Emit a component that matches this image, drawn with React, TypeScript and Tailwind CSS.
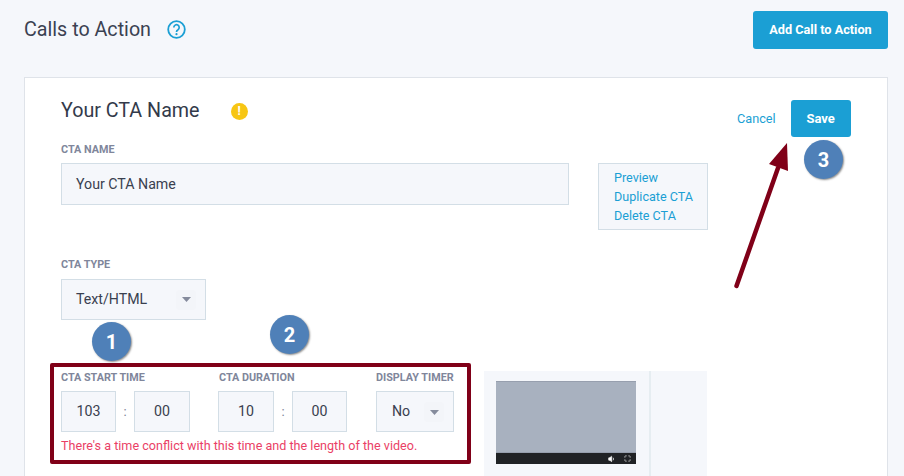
import { Volume1, Maximize } from "lucide-react";

const roboto = "font-['Roboto',sans-serif]";

function Label({ text, className = "" }: { text: string; className?: string }) {
  return <div className={"text-[10.8px] leading-[14px] font-bold text-[#80869b] " + className}>{text}</div>;
}

function Caret() {
  return (
    <span className="flex h-[20px] w-[20px] items-center justify-center rounded-sm bg-[#f3f5f9]">
      <svg width="9" height="5" viewBox="0 0 9 5">
        <path d="M0 0h9L4.5 5z" fill="#858b9c" />
      </svg>
    </span>
  );
}

function TimeBox({ value, width }: { value: string; width: string }) {
  return (
    <div className={"flex h-[41px] items-center justify-center border border-[#d3dee6] bg-[#f5f7fb] pt-px text-[14.2px] text-[#39404f] " + width}>
      {value}
    </div>
  );
}

function Badge({ n, className }: { n: number; className: string }) {
  return (
    <div
      className={
        "absolute flex h-[39px] w-[39px] items-center justify-center rounded-full bg-[#4f80b8] text-[20px] font-bold text-white shadow-[1px_1px_2px_rgba(0,0,0,0.45)] " +
        className
      }
    >
      {n}
    </div>
  );
}

export default function App() {
  return (
    <div className={"relative h-[476px] w-[904px] overflow-hidden bg-[#f5f7fb] " + roboto}>
      <div className="flex h-[77px] items-start justify-between pl-6 pr-4 pt-[11px]">
        <div className="flex h-[37px] items-center">
          <span className="text-[19.7px] text-[#3b4252]">Calls to Action</span>
          <svg className="ml-[16px]" width="19" height="19" viewBox="0 0 19 19" fill="none">
            <circle cx="9.5" cy="9.5" r="8.3" stroke="#1b9fd4" strokeWidth="1.8" />
            <path d="M6.8 7.4a2.7 2.7 0 1 1 4.2 2.3c-1 .6-1.5 1.1-1.5 2.2" stroke="#1b9fd4" strokeWidth="1.7" />
            <circle cx="9.5" cy="14.2" r="1.1" fill="#1b9fd4" />
          </svg>
        </div>
        <button className="h-[38px] w-[135px] rounded-[3px] bg-[#1b9fd4] text-[12.7px] font-bold text-white">
          Add Call to Action
        </button>
      </div>

      <div className="ml-6 mr-4 flex h-[420px] border border-[#dfe3e9] bg-white pl-[36px] pt-[22px]">
        <div className="w-[647px]">
          <div className="flex h-[22px] items-center">
            <span className="text-[19.7px] text-[#333a4a]">Your CTA Name</span>
            <span className="ml-[31px] flex h-[17px] w-[17px] items-center justify-center rounded-full bg-[#f7c614] text-[12px] font-bold text-white">
              !
            </span>
          </div>

          <Label text="CTA NAME" className="mt-[21px]" />
          <div className="mt-[6px] flex items-start">
            <div className="flex h-[42px] w-[508px] items-center border border-[#d3dee6] bg-[#f5f7fb] pl-[14px] pt-px text-[14.2px] text-[#39404f]">
              Your CTA Name
            </div>
            <div className="ml-[29px] flex h-[67px] w-[110px] flex-col justify-center border border-[#d3dee6] bg-[#f5f7fb] pl-[15px] text-[12.6px] leading-[19px] text-[#1b9fd4]">
              <span>Preview</span>
              <span>Duplicate CTA</span>
              <span>Delete CTA</span>
            </div>
          </div>

          <Label text="CTA TYPE" className="mt-[28px]" />
          <div className="mt-[7px] flex h-[41px] w-[145px] items-center justify-between border border-[#d3dee6] bg-[#f5f7fb] pl-[14px] pr-[9px] text-[14.2px] text-[#39404f]">
            Text/HTML
            <Caret />
          </div>

          <div className="ml-[-11px] mt-[43px] flex items-start">
            <div className="h-[101px] w-[421px] rounded-[2px] border-4 border-[#800018] pl-[7px] pt-[4px]">
              <div className="flex">
                <Label text="CTA START TIME" className="w-[158px]" />
                <Label text="CTA DURATION" className="w-[157px]" />
                <Label text="DISPLAY TIMER" />
              </div>
              <div className="mt-[6px] flex items-center">
                <TimeBox value="103" width="w-[55px]" />
                <span className="w-[18px] text-center text-[13px] text-[#7b8194]">:</span>
                <TimeBox value="00" width="w-[56px]" />
                <div className="w-[28px]" />
                <TimeBox value="10" width="w-[56px]" />
                <span className="w-[18px] text-center text-[13px] text-[#7b8194]">:</span>
                <TimeBox value="00" width="w-[55px]" />
                <div className="w-[29px]" />
                <div className="flex h-[41px] w-[78px] items-center justify-between border border-[#d3dee6] bg-[#f5f7fb] pl-[15px] pr-[9px] pt-px text-[14.2px] text-[#39404f]">
                  No
                  <Caret />
                </div>
              </div>
              <div className="mt-[6px] text-[12.6px] leading-[16px] text-[#ea3f66]">
                There's a time conflict with this time and the length of the video.
              </div>
            </div>

            <div className="ml-[13px] mt-[8px] flex h-[105px] w-[223px] bg-[#f5f7fb]">
              <div className="h-full w-[167px] border-r-2 border-[#e6edf1] pl-[12px] pt-[10px]">
                <div className="h-[72px] w-[140px] border-y border-[#979fae] bg-[#a8b1bf]" />
                <div className="flex h-[11px] w-[140px] items-center justify-end gap-[8px] bg-[#202225] pr-[5px] text-white">
                  <Volume1 size={8} fill="white" strokeWidth={2} />
                  <Maximize size={7} strokeWidth={2} />
                </div>
              </div>
            </div>
          </div>
        </div>

        <div className="ml-[29px] flex h-[37px] items-center">
          <span className="text-[12.7px] text-[#1b9fd4]">Cancel</span>
          <button className="ml-[15px] h-[37px] w-[60px] rounded-[3px] bg-[#1b9fd4] text-[13px] font-bold text-white">
            Save
          </button>
        </div>
      </div>

      <svg className="absolute left-0 top-0" width="904" height="476" fill="none">
        <path d="M736.5 286L778 168" stroke="#800018" strokeWidth="4.5" strokeLinecap="round" />
        <path d="M787 143L769 164L788 171Z" fill="#800018" />
      </svg>
      <Badge n={1} className="left-[92px] top-[322px]" />
      <Badge n={2} className="left-[270px] top-[315px]" />
      <Badge n={3} className="left-[804px] top-[140px]" />
    </div>
  );
}
